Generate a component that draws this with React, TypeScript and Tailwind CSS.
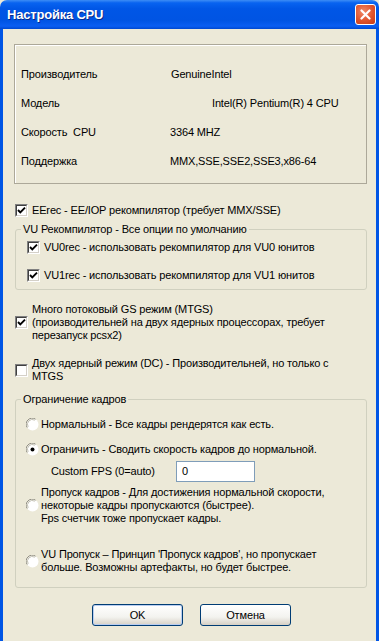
import type { ReactNode } from 'react'

function Check({ checked = false }: { checked?: boolean }) {
  return (
    <span className="relative flex h-[13px] w-[13px] shrink-0 border-t border-l border-t-[#808080] border-l-[#808080] border-b border-r border-b-white border-r-white">
      <span className="flex h-full w-full items-center justify-center border-t border-l border-t-[#404040] border-l-[#404040] border-b border-r border-b-[#d4d0c8] border-r-[#d4d0c8] bg-white">
        {checked && (
          <svg width="9" height="9" viewBox="0 0 9 9">
            <path d="M1 4 L3.3 6.4 L8 1.6" fill="none" stroke="#000" strokeWidth="1.9" />
          </svg>
        )}
      </span>
    </span>
  )
}

function Radio({ checked = false }: { checked?: boolean }) {
  return (
    <svg width="13" height="13" viewBox="0 0 13 13" className="shrink-0">
      <circle cx="6.5" cy="6.5" r="6" fill="#fff" />
      <path d="M1.2 9.5 A6 6 0 0 1 9.5 1.2" fill="none" stroke="#8a887c" strokeWidth="1" />
      <path d="M2.2 8.8 A4.8 4.8 0 0 1 8.8 2.2" fill="none" stroke="#c2c0b2" strokeWidth="1" />
      {checked && <circle cx="6.5" cy="6.5" r="2" fill="#000" />}
    </svg>
  )
}

function InfoRow({ label, value, valueClass }: { label: string; value: string; valueClass: string }) {
  return (
    <div className="flex h-[29px] items-center pl-[6px]">
      <span className={valueClass}>{label}</span>
      <span>{value}</span>
    </div>
  )
}

function Group({ legend, className, children }: { legend: string; className: string; children: ReactNode }) {
  return (
    <fieldset className={`ml-[12px] w-[352px] rounded-[3px] border border-[#d0d0bf] ${className}`}>
      <legend className="ml-[5px] px-[2px] leading-[13px]">{legend}</legend>
      {children}
    </fieldset>
  )
}

export default function App() {
  return (
    <div className="flex h-[641px] w-[379px] flex-col overflow-hidden bg-[#ece9d8] font-['Liberation_Sans',Arial,sans-serif] text-[11px] leading-[13px] tracking-[-0.15px] text-black">
      {/* Title bar */}
      <div className="flex h-[29px] shrink-0 items-center justify-between rounded-t-[7px] bg-[linear-gradient(to_bottom,#3d8df5_0%,#0863f0_10%,#0056e6_30%,#0054e3_70%,#0a5ef2_90%,#0048d0_100%)] pl-[7px] pr-[3px]">
        <span className="pb-[1px] text-[13px] font-bold tracking-[-0.2px] text-white [text-shadow:1px_1px_0_#0a2a8a]">Настройка CPU</span>
        <div className="flex h-[21px] w-[21px] items-center justify-center rounded-[3px] border border-white bg-[radial-gradient(circle_at_40%_35%,#f08a6a_0%,#e0532c_55%,#c63a14_100%)]">
          <svg width="11" height="11" viewBox="0 0 11 11">
            <path d="M1.5 1.5 L9.5 9.5 M9.5 1.5 L1.5 9.5" stroke="#fff" strokeWidth="2.2" strokeLinecap="round" />
          </svg>
        </div>
      </div>

      {/* Body */}
      <div className="flex-1 border-x-[3px] border-x-[#0055e5]">
        {/* CPU info */}
        <div className="ml-[11px] mt-[15px] h-[140px] w-[353px] border border-[#aca899] pt-[15px] shadow-[inset_1px_1px_0_#fff]">
          <InfoRow label="Производитель" value="GenuineIntel" valueClass="w-[150px]" />
          <InfoRow label="Модель" value="Intel(R) Pentium(R) 4 CPU" valueClass="w-[191px]" />
          <InfoRow label="Скорость  CPU" value="3364 MHZ" valueClass="w-[149px] whitespace-pre" />
          <InfoRow label="Поддержка" value="MMX,SSE,SSE2,SSE3,x86-64" valueClass="w-[149px]" />
        </div>

        <div className="ml-[12px] mt-[20px] flex items-center gap-[4px]">
          <Check checked />
          <span>EErec - EE/IOP рекомпилятор (требует MMX/SSE)</span>
        </div>

        <Group legend="VU Рекомпилятор - Все опции по умолчанию" className="mt-[6px] pb-[7px]">
          <div className="ml-[11px] mt-[5px] flex items-center gap-[4px]">
            <Check checked />
            <span>VU0rec - использовать рекомпилятор для VU0 юнитов</span>
          </div>
          <div className="ml-[11px] mt-[15px] flex items-center gap-[4px]">
            <Check checked />
            <span>VU1rec - использовать рекомпилятор для VU1 юнитов</span>
          </div>
        </Group>

        <div className="ml-[12px] mt-[13px] flex items-center gap-[4px]">
          <Check checked />
          <span>
            Много потоковый GS режим (MTGS)
            <br />
            (производительней на двух ядерных процессорах, требует
            <br />
            перезапуск pcsx2)
          </span>
        </div>

        <div className="ml-[12px] mt-[15px] flex items-center gap-[4px]">
          <Check />
          <span>
            Двух ядерный режим (DC) - Производительней, но только с
            <br />
            MTGS
          </span>
        </div>

        <Group legend="Ограничение кадров" className="mt-[10px] pb-[13px]">
          <div className="ml-[10px] mt-[12px] flex items-center gap-[2px]">
            <Radio />
            <span>Нормальный - Все кадры рендерятся как есть.</span>
          </div>
          <div className="ml-[10px] mt-[12px] flex items-center gap-[2px]">
            <Radio checked />
            <span>Ограничить - Сводить скорость кадров до нормальной.</span>
          </div>
          <div className="ml-[35px] mt-[5px] flex items-center">
            <span className="w-[125px]">Custom FPS (0=auto)</span>
            <div className="flex h-[21px] w-[79px] items-center border border-[#7f9db9] bg-white pl-[5px]">0</div>
          </div>
          <div className="ml-[10px] mt-[4px] flex items-center gap-[2px]">
            <Radio />
            <span>
              Пропуск кадров - Для достижения нормальной скорости,
              <br />
              некоторые кадры пропускаются (быстрее).
              <br />
              Fps счетчик тоже пропускает кадры.
            </span>
          </div>
          <div className="ml-[10px] mt-[23px] flex items-center gap-[2px]">
            <Radio />
            <span>
              VU Пропуск – Принцип 'Пропуск кадров', но пропускает
              <br />
              больше. Возможны артефакты, но будет быстрее.
            </span>
          </div>
        </Group>

        <div className="ml-[89px] mt-[16px] flex gap-[17px]">
          <button className="h-[22px] w-[91px] rounded-[3px] border border-[#003c74] bg-[linear-gradient(to_bottom,#fff_0%,#f3f3ef_60%,#d6d0c5_100%)] shadow-[inset_0_0_0_1px_#b9cdf0]">
            OK
          </button>
          <button className="h-[22px] w-[91px] rounded-[3px] border border-[#003c74] bg-[linear-gradient(to_bottom,#fff_0%,#f3f3ef_60%,#d6d0c5_100%)]">
            Отмена
          </button>
        </div>
      </div>
    </div>
  )
}
